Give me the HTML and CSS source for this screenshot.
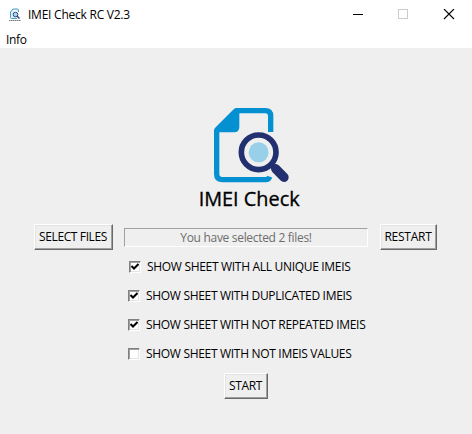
FILE: index.html
```html
<!DOCTYPE html>
<html lang="en">
<head>
<meta charset="utf-8">
<title>IMEI Check RC V2.3</title>
<link rel="stylesheet" href="styles.css">
</head>
<body>
<header class="titlebar">
  <svg class="app-icon" viewBox="0 0 14 14">
    <path d="M5 1H9.5Q10.5 1 10.5 2V4M5 1L2.5 4V9.5Q2.5 10.5 3.5 10.5H9" fill="#d8eef8" stroke="#4a9cc0" stroke-width="1"/>
    <circle cx="7.5" cy="6.5" r="2.3" fill="#a9d8ee" stroke="#31477f"/>
    <path d="M9 8L11.5 10.5" stroke="#31477f" stroke-width="1.5"/>
    <path d="M1 12.5H13" stroke="#777" stroke-width="1" stroke-dasharray="1.5 .5"/>
  </svg>
  <span class="title">IMEI Check RC V2.3</span>
  <svg class="controls" viewBox="0 0 104 12" shape-rendering="crispEdges">
    <path d="M1 5.5H11" stroke="#000"/>
    <rect x="46.5" y="0.5" width="9" height="9" fill="none" stroke="#ccc"/>
    <path d="M92 0L102 10M102 0L92 10" stroke="#000" stroke-width="1.1" shape-rendering="auto"/>
  </svg>
</header>
<nav class="menubar"><span class="info">Info</span></nav>
<main class="content">
  <svg class="logo" viewBox="0 0 360 360">
    <path d="M142 47H226Q242 47 242 63V111M80 107V237Q80 254 97 254H228Q236 254 239 245" fill="none" stroke="#0590d1" stroke-width="16"/>
    <path d="M139 39H148V96Q148 112 132 112H72V105Q73 101 77 97L131 43Q135 39 139 39Z" fill="#0590d1"/>
    <path d="M240 207L275 241" stroke="#efefef" stroke-width="36"/>
    <circle cx="206" cy="172" r="52" fill="#efefef" stroke="#22306f" stroke-width="17"/>
    <circle cx="206" cy="172" r="30" fill="#99d0e9"/>
    <path d="M243 207L256 220" stroke="#22306f" stroke-width="18"/>
    <path d="M257 221L282 247" stroke="#22306f" stroke-width="28" stroke-linecap="round"/>
    <text class="logo-text" x="26" y="333" textLength="303" lengthAdjust="spacingAndGlyphs">IMEI Check</text>
  </svg>
  <div class="file-row">
    <button class="btn select"><span>SELECT FILES</span></button>
    <div class="status"><span>You have selected 2 files!</span></div>
    <button class="btn restart"><span>RESTART</span></button>
  </div>
  <div class="options">
    <div class="option first"><span class="box"><svg viewBox="0 0 8 8"><path d="M.5 3L3 5.5L7.5 1" /></svg></span><span class="label">SHOW SHEET WITH ALL UNIQUE IMEIS</span></div>
    <div class="option"><span class="box"><svg viewBox="0 0 8 8"><path d="M.5 3L3 5.5L7.5 1" /></svg></span><span class="label">SHOW SHEET WITH DUPLICATED IMEIS</span></div>
    <div class="option"><span class="box"><svg viewBox="0 0 8 8"><path d="M.5 3L3 5.5L7.5 1" /></svg></span><span class="label">SHOW SHEET WITH NOT REPEATED IMEIS</span></div>
    <div class="option"><span class="box"></span><span class="label">SHOW SHEET WITH NOT IMEIS VALUES</span></div>
  </div>
  <button class="btn start"><span>START</span></button>
</main>
</body>
</html>
```
FILE: styles.css
```css
* { box-sizing: border-box; }
body {
  margin: 0;
  width: 472px;
  height: 434px;
  overflow: hidden;
  background: #efefef;
  color: #000;
  font: 12px/16px "Open Sans", "Noto Sans", sans-serif;
  white-space: nowrap;
}
.titlebar { display: flex; height: 30px; background: #fff; padding: 0 16px 0 8px; }
.app-icon { width: 14px; height: 14px; margin-top: 8px; }
.title { margin: 7px 0 0 6px; letter-spacing: -0.24px; }
.controls { width: 104px; height: 12px; margin: 9px 0 0 auto; }
.menubar { height: 18px; background: #fff; padding: 2px 0 0 6px; }
.info { display: block; letter-spacing: -0.35px; }
.content { display: flex; flex-direction: column; padding-top: 47px; }
.logo { width: 120px; height: 120px; margin-left: 190px; }
.logo-text { font: 60px "Open Sans", "Noto Sans", sans-serif; fill: #000; stroke: #000; stroke-width: 1px; }
.file-row { display: flex; align-items: center; margin: 9px 0 0 34px; height: 26px; }
.btn {
  display: flex;
  align-items: center;
  justify-content: center;
  height: 26px;
  padding: 0 1px 0 0;
  color: #000;
  background: #efefef;
  font: inherit;
  letter-spacing: -0.38px;
  border: 1px solid;
  border-color: #fff #696969 #696969 #fff;
  box-shadow: inset -1px -1px #a0a0a0, inset 1px 1px #e3e3e3;
}
.select { width: 79px; }
.restart { width: 57px; margin-left: 12px; letter-spacing: -0.25px; }
.status {
  width: 244px;
  height: 19px;
  margin-left: 11px;
  border: 1px solid;
  border-color: #a0a0a0 #fff #fff #a0a0a0;
  color: #6d6d6d;
  text-align: center;
  line-height: 18px;
  letter-spacing: -0.31px;
}
.options { margin: 8px 0 0 128px; }
.option { display: flex; align-items: center; height: 17px; margin-bottom: 12px; }
.first { margin-left: 1px; }
.box {
  width: 12px;
  height: 12px;
  background: #fff;
  border: 1px solid;
  border-color: #808080 #fff #fff #808080;
  box-shadow: inset 1px 1px #a0a0a0, inset -1px -1px #e3e3e3;
  padding: 1px;
}
.box svg { display: block; width: 8px; height: 8px; }
.box path { fill: none; stroke: #000; stroke-width: 2; }
.label { margin-left: 6px; letter-spacing: -0.31px; }
.start { width: 44px; margin: -1px 0 0 224px; }
```
